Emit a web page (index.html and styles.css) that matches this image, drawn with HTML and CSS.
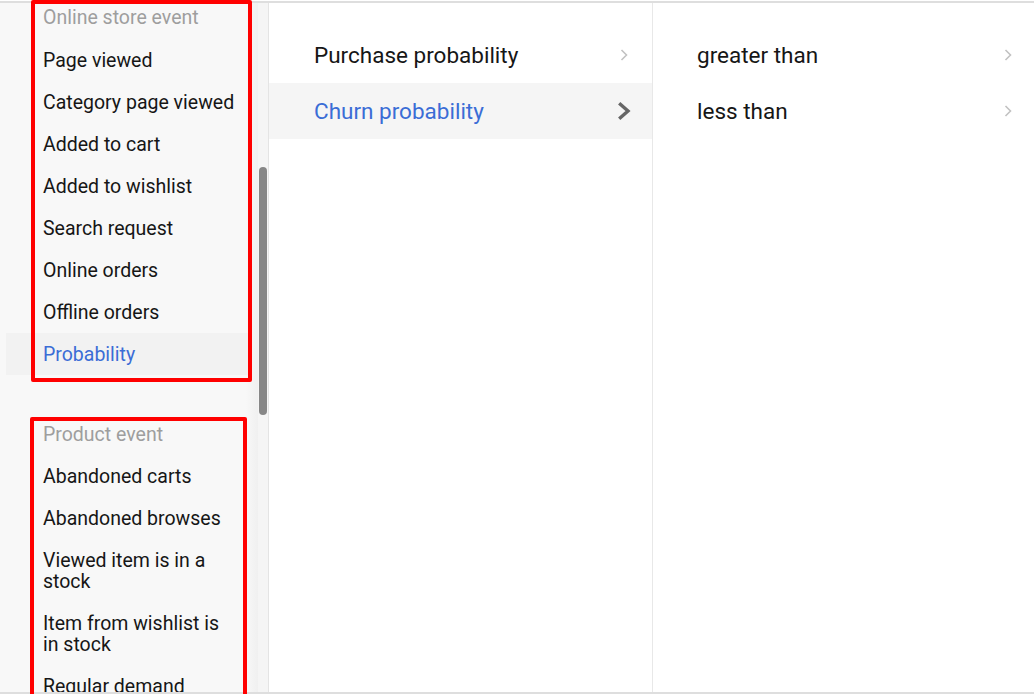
FILE: index.html
```html
<!DOCTYPE html>
<html lang="en">
<head>
<meta charset="utf-8">
<title>Segment conditions</title>
<link rel="stylesheet" href="styles.css">
</head>
<body>
<div class="page">
  <div class="frame">
    <aside class="events">
      <div class="events-list">
        <div class="group group-first">
          <div class="group-title">Online store event</div>
          <div class="item">Page viewed</div>
          <div class="item">Category page viewed</div>
          <div class="item">Added to cart</div>
          <div class="item">Added to wishlist</div>
          <div class="item">Search request</div>
          <div class="item">Online orders</div>
          <div class="item">Offline orders</div>
          <div class="item item-active">Probability</div>
        </div>
        <div class="group group-second">
          <div class="group-title">Product event</div>
          <div class="item">Abandoned carts</div>
          <div class="item">Abandoned browses</div>
          <div class="item">Viewed item is in a stock</div>
          <div class="item">Item from wishlist is in stock</div>
          <div class="item">Regular demand</div>
        </div>
      </div>
      <div class="scroll-track"><div class="scroll-thumb"></div></div>
    </aside>

    <section class="col col-mid">
      <div class="row">
        <span>Purchase probability</span>
        <span class="chev"><svg width="8" height="12" viewBox="0 0 8 12"><polyline points="1.5,1 6.5,6 1.5,11" fill="none" stroke="#c2c2c2" stroke-width="1.6"/></svg></span>
      </div>
      <div class="row row-active">
        <span>Churn probability</span>
        <span class="chev"><svg width="14" height="20" viewBox="0 0 14 20"><polyline points="2.2,2.2 11,10 2.2,17.8" fill="none" stroke="#666666" stroke-width="3.4"/></svg></span>
      </div>
    </section>

    <section class="col col-right">
      <div class="row">
        <span>greater than</span>
        <span class="chev"><svg width="8" height="12" viewBox="0 0 8 12"><polyline points="1.5,1 6.5,6 1.5,11" fill="none" stroke="#c2c2c2" stroke-width="1.6"/></svg></span>
      </div>
      <div class="row">
        <span>less than</span>
        <span class="chev"><svg width="8" height="12" viewBox="0 0 8 12"><polyline points="1.5,1 6.5,6 1.5,11" fill="none" stroke="#c2c2c2" stroke-width="1.6"/></svg></span>
      </div>
    </section>
  </div>
  <div class="annot annot-first"></div>
  <div class="annot annot-second"></div>
</div>
</body>
</html>
```

FILE: styles.css
```css
html, body {
  margin: 0;
  padding: 0;
  background: #ffffff;
}

.page {
  position: relative;
  width: 1034px;
  height: 694px;
  overflow: hidden;
  font-family: Roboto, "Liberation Sans", Arial, sans-serif;
  color: #161616;
}

.frame {
  margin-top: 1px;
  height: 693px;
  box-sizing: border-box;
  border-top: 2px solid #dedede;
  border-bottom: 2px solid #dedede;
  display: flex;
  overflow: hidden;
}

/* left events panel */
.events {
  display: flex;
  flex: 0 0 268px;
  height: 100%;
}

.events-list {
  width: 258px;
  height: 100%;
  overflow: hidden;
  background: linear-gradient(to right, #f8f8f8 0, #f8f8f8 246px, #f0f0f0 258px);
}

.group-first {
  margin-top: -7px;
}

.group-second {
  margin-top: 37.5px;
}

.group-title,
.item {
  margin: 0 8px 0 6px;
  padding: 10.5px 13px 10.5px 37px;
  font-size: 19.5px;
  line-height: 21px;
}

.group-title {
  padding-top: 11px;
  padding-bottom: 11px;
  color: #9e9e9e;
}

.item-active {
  background: #f2f2f2;
  color: #3b6dd6;
}

.scroll-track {
  width: 10px;
  height: 100%;
  background: #f5f5f5;
}

.scroll-thumb {
  margin-top: 164px;
  margin-left: 1px;
  width: 8px;
  height: 248px;
  border-radius: 4px;
  background: #878787;
}

/* columns */
.col {
  height: 100%;
  box-sizing: border-box;
  padding-top: 24px;
  font-size: 22.5px;
}

.col-mid {
  flex: 0 0 385px;
  border-left: 1px solid #e4e4e4;
  border-right: 1px solid #e8e8e8;
}

.col-right {
  flex: 1 1 auto;
}

.row {
  height: 56px;
  display: flex;
  align-items: center;
  justify-content: space-between;
  line-height: 24px;
}

.col-mid .row {
  padding: 0 20px 0 45px;
}

.col-right .row {
  padding: 0 18px 0 44px;
}

.row-active {
  background: #f5f5f5;
  color: #3b6dd6;
}

.chev {
  width: 16px;
  display: flex;
  justify-content: center;
  align-items: center;
}

.chev svg {
  display: block;
}

/* red annotation outlines drawn over the list */
.annot {
  position: absolute;
  box-sizing: border-box;
  border: 4px solid #ff0000;
  border-radius: 2px;
}

.annot-first {
  left: 31px;
  top: 0;
  width: 221px;
  height: 382px;
}

.annot-second {
  left: 30px;
  top: 417px;
  width: 217px;
  height: 400px;
}
```
